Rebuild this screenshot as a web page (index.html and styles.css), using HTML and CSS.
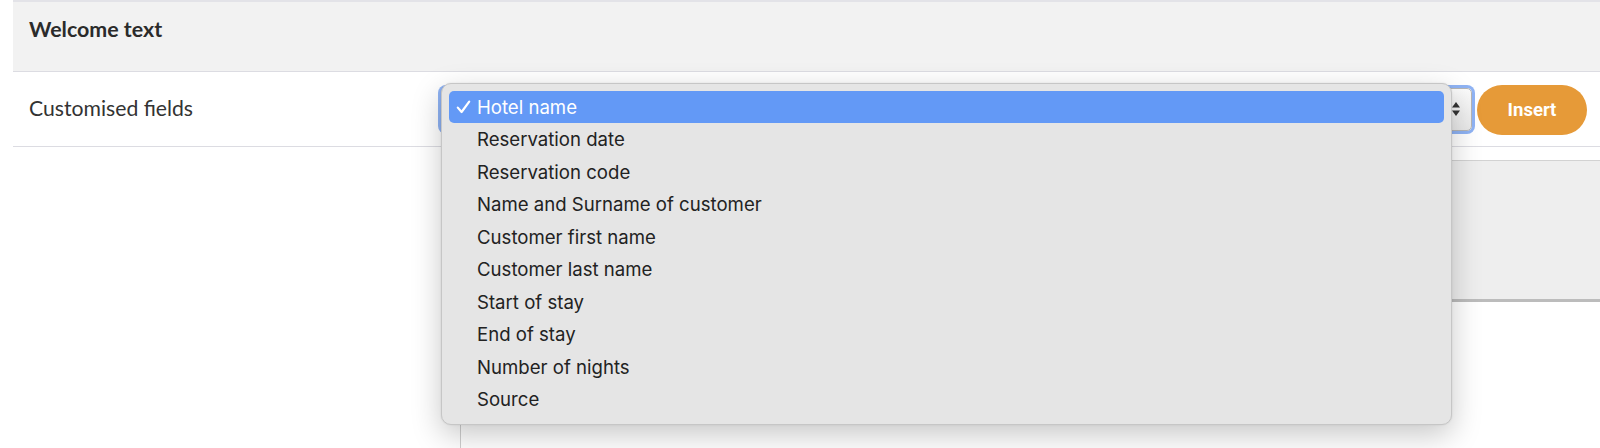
FILE: index.html
```html
<!DOCTYPE html>
<html lang="en">
<head>
<meta charset="utf-8">
<title>Welcome text</title>
<link rel="stylesheet" href="styles.css">
</head>
<body>
<div class="page">
  <div class="section-header">Welcome text</div>
  <div class="field-row">
    <div class="field-label">Customised fields</div>
    <div class="select-wrap">
      <div class="select-box">
        <svg class="select-arrows" width="10" height="16" viewBox="0 0 10 16"><path d="M5 1 L9 6.5 H1 Z" fill="#333"/><path d="M5 15 L9 9.5 H1 Z" fill="#333"/></svg>
      </div>
      <ul class="dropdown">
        <li class="opt selected"><svg class="check" width="15" height="14" viewBox="0 0 15 14"><path d="M1.8 7.6 L5.6 12 L13.2 1.6" fill="none" stroke="#ffffff" stroke-width="2.2" stroke-linecap="round" stroke-linejoin="round"/></svg>Hotel name</li>
        <li class="opt">Reservation date</li>
        <li class="opt">Reservation code</li>
        <li class="opt">Name and Surname of customer</li>
        <li class="opt">Customer first name</li>
        <li class="opt">Customer last name</li>
        <li class="opt">Start of stay</li>
        <li class="opt">End of stay</li>
        <li class="opt">Number of nights</li>
        <li class="opt">Source</li>
      </ul>
    </div>
    <button class="insert-btn">Insert</button>
  </div>
  <div class="editor">
    <div class="editor-toolbar"></div>
    <div class="editor-body"></div>
  </div>
</div>
</body>
</html>
```

FILE: styles.css
```css
html, body {
  margin: 0;
  padding: 0;
  background: #ffffff;
  height: 100%;
  overflow: hidden;
}

.page {
  padding-left: 13px;
  font-family: Lato, "Open Sans", sans-serif;
  color: #2e2e2e;
}

.section-header {
  height: 72px;
  box-sizing: border-box;
  border-top: 2px solid #e3e3e8;
  border-bottom: 1px solid #dcdce2;
  background: #f2f2f2;
  padding-left: 16px;
  padding-bottom: 15px;
  display: flex;
  align-items: center;
  font-weight: 700;
  font-size: 21.4px;
  color: #2b2b2b;
}

.field-row {
  display: grid;
  grid-template-columns: 412px 1fr auto;
  align-items: center;
  height: 75px;
  border-bottom: 1px solid #dcdce2;
  padding-left: 16px;
  padding-right: 13px;
  box-sizing: border-box;
}

.field-label {
  font-size: 21.2px;
  color: #333;
  margin-bottom: 2px;
}

.select-wrap {
  position: relative;
  margin-right: 5px;
}

.select-box {
  height: 43px;
  box-sizing: border-box;
  border: 1px solid #b5b5b5;
  border-radius: 5px;
  background: linear-gradient(#fbfbfb, #e9e9e9);
  box-shadow: 0 0 0 3px #8fb3f4;
  display: flex;
  align-items: center;
  justify-content: flex-end;
  padding: 0 10px 0 12px;
}

.select-arrows {
  display: block;
}

.dropdown {
  position: absolute;
  left: 0;
  top: -5px;
  width: 1011px;
  margin: 0;
  padding: 7px 7px 8px;
  box-sizing: border-box;
  list-style: none;
  background: #e5e5e5;
  border: 1px solid #c6c6c6;
  border-radius: 10px;
  box-shadow: 0 10px 30px rgba(0, 0, 0, 0.22), 0 0 2px rgba(0, 0, 0, 0.1);
  font-family: Inter, sans-serif;
  font-size: 18.6px;
  color: #222;
  z-index: 5;
}

.opt {
  height: 32.5px;
  display: flex;
  align-items: center;
  padding-left: 28px;
  position: relative;
  border-radius: 5px;
}

.opt.selected {
  background: #6399f6;
  color: #ffffff;
  height: 32px;
  margin-bottom: 0.5px;
}

.check {
  position: absolute;
  left: 7px;
  top: 9px;
}

.insert-btn {
  width: 110px;
  height: 50px;
  border: none;
  border-radius: 25px;
  background: #e69a38;
  color: #ffffff;
  font-family: Roboto, sans-serif;
  font-weight: 700;
  font-size: 18.5px;
  padding: 0;
  margin-top: 1px;
}

.editor {
  margin-left: 447px;
  margin-top: 13px;
}

.editor-toolbar {
  height: 142px;
  background: #eeeeee;
  border-top: 1px solid #d2d2d2;
  border-bottom: 3px solid #bcbcbc;
  box-sizing: border-box;
}

.editor-body {
  height: 146px;
  border-left: 1px solid #cfcfcf;
}
```
